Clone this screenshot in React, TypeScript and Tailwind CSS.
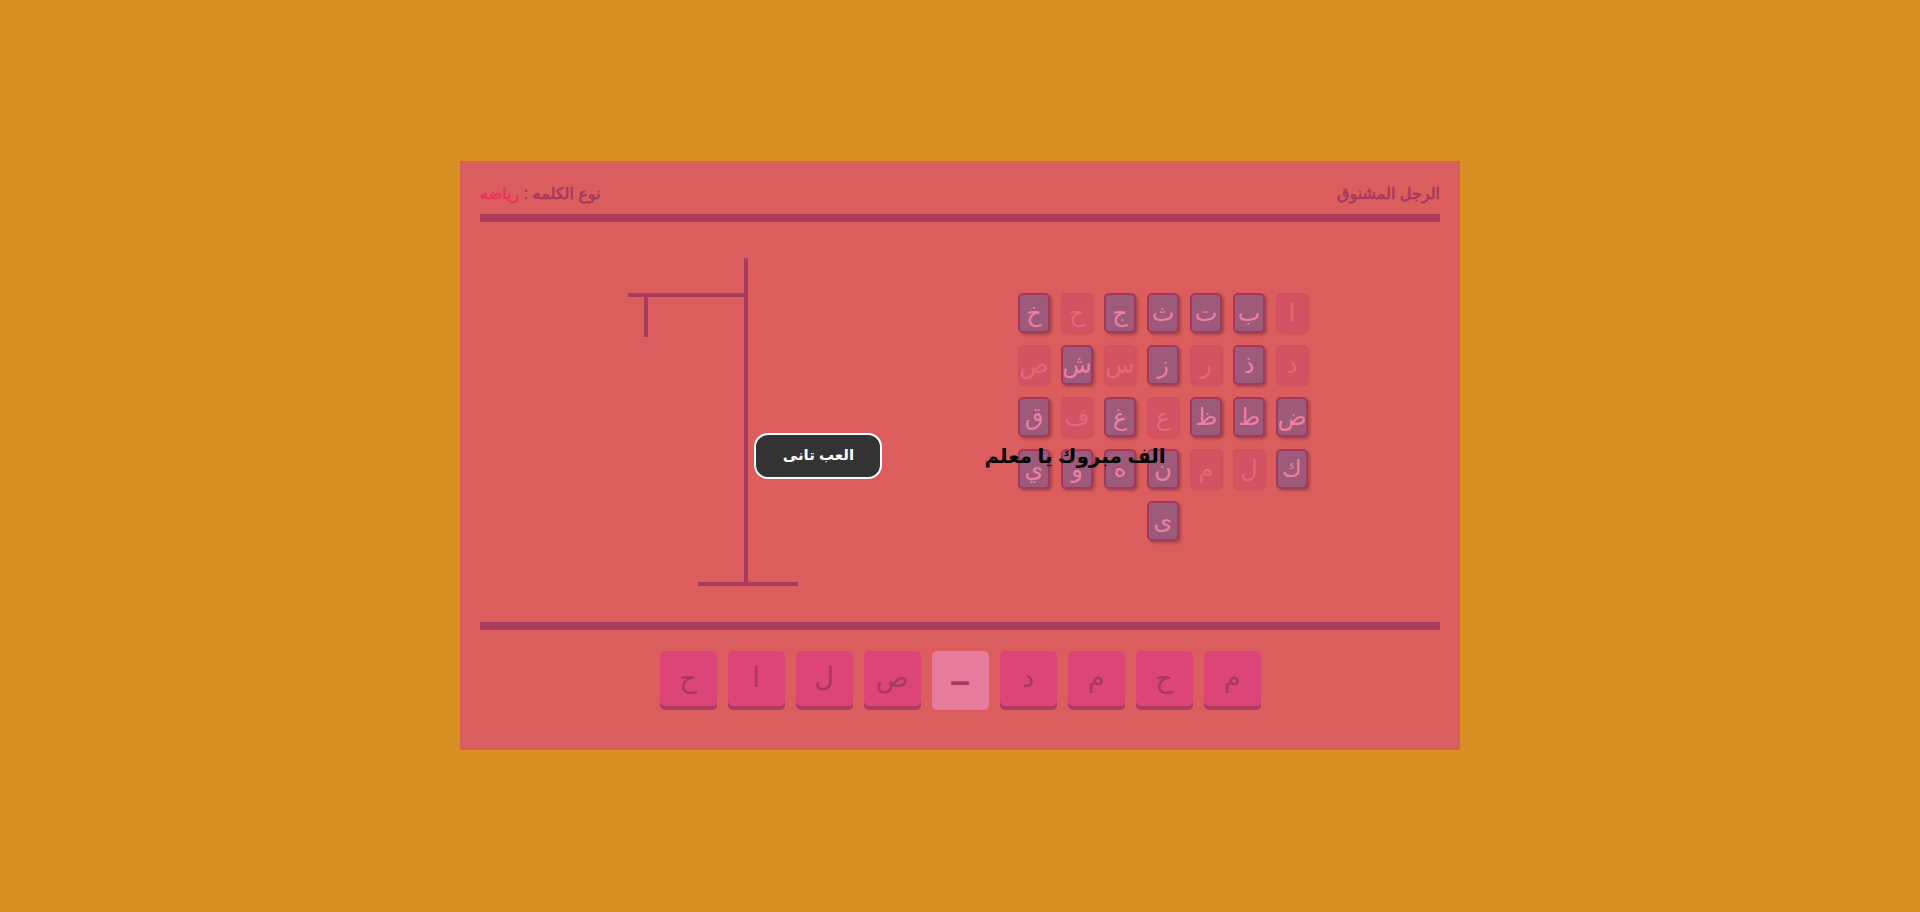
import React from "react";

const rows: [string, boolean][] = [
  ["ا", false], ["ب", true], ["ت", true], ["ث", true], ["ج", true], ["ح", false], ["خ", true],
  ["د", false], ["ذ", true], ["ر", false], ["ز", true], ["س", false], ["ش", true], ["ص", false],
  ["ض", true], ["ط", true], ["ظ", true], ["ع", false], ["غ", true], ["ف", false], ["ق", true],
  ["ك", true], ["ل", false], ["م", false], ["ن", true], ["ه", true], ["و", true], ["ي", true],
  ["ى", true],
];

const word = ["م", "ح", "م", "د", " ", "ص", "ل", "ا", "ح"];

export default function App() {
  return (
    <div
      className="min-h-screen w-full bg-[#d89022] flex justify-center pt-[161px]"
      style={{ fontFamily: '"Liberation Sans", "DejaVu Sans", "Noto Sans", sans-serif' }}
    >
      <div dir="rtl" className="relative w-[1000px] h-[589px] bg-[#dc5d5d] px-5 flex flex-col">
        {/* header */}
        <div className="flex justify-between items-center pt-[23px] pb-[10px]">
          <div className="leading-5 text-base text-[#a43a5c] [-webkit-text-stroke:0.6px_#a43a5c]">الرجل المشنوق</div>
          <div className="leading-5 text-base text-[#a43a5c] [-webkit-text-stroke:0.6px_#a43a5c]">
            نوع الكلمه : <span className="text-[#e8345c] [-webkit-text-stroke:0.6px_#e8345c]">رياضه</span>
          </div>
        </div>
        <div className="h-2 bg-[#a93b5d]" />

        {/* middle */}
        <div className="h-[400px] flex items-center justify-center gap-[220px] pl-4">
          <div className="w-[290px] flex flex-wrap justify-center gap-x-[11px] gap-y-[12px] mb-[10px]">
            {rows.map(([l, active], i) =>
              active ? (
                <div
                  key={i}
                  className="w-8 h-10 rounded-[5px] bg-[#9e5a7a] border-2 border-[#a3385c] shadow-[2px_2px_3px_rgba(0,0,0,0.25)] flex items-center justify-center text-[24px] text-[#ec80a2]"
                >
                  {l}
                </div>
              ) : (
                <div
                  key={i}
                  className="w-8 h-10 rounded-[5px] bg-[#d45262] border-2 border-[#d3505f] shadow-[1px_1px_2px_rgba(0,0,0,0.08)] flex items-center justify-center text-[24px] text-[#e2687e]"
                >
                  {l}
                </div>
              )
            )}
          </div>
          <svg width="170" height="328" viewBox="0 0 170 328" className="block">
            <rect x="116" y="0" width="4" height="326" fill="#a93b5d" />
            <rect x="0" y="35" width="120" height="4" fill="#a93b5d" />
            <rect x="16" y="39" width="4" height="40" fill="#a93b5d" />
            <rect x="70" y="324" width="100" height="4" fill="#a93b5d" />
          </svg>
        </div>

        <div className="h-2 bg-[#a93b5d]" />

        {/* word */}
        <div className="flex justify-center gap-[11px] mt-[21px]">
          {word.map((l, i) =>
            l === " " ? (
              <div
                key={i}
                className="w-[57px] h-[59px] rounded-[5px] bg-[#e77b9d] flex items-center justify-center"
              >
                <span className="text-[36px] font-bold text-[#a8385e] leading-none">–</span>
              </div>
            ) : (
              <div
                key={i}
                className="w-[57px] h-[55px] rounded-[5px] bg-[#dd4477] shadow-[0_4px_0_#b13a62] flex items-center justify-center text-[27px] text-[#a8385e]"
              >
                {l}
              </div>
            )
          )}
        </div>

        {/* overlay */}
        <div className="absolute inset-0 flex items-center justify-center gap-[102px] pointer-events-none">
          <div className="text-[20px] font-bold text-black leading-7">الف مبروك يا معلم</div>
          <button className="w-[128px] h-[46px] rounded-[14px] bg-[#333333] border-2 border-white text-white text-[15px] font-bold pointer-events-auto">
            العب تانى
          </button>
        </div>
      </div>
    </div>
  );
}
